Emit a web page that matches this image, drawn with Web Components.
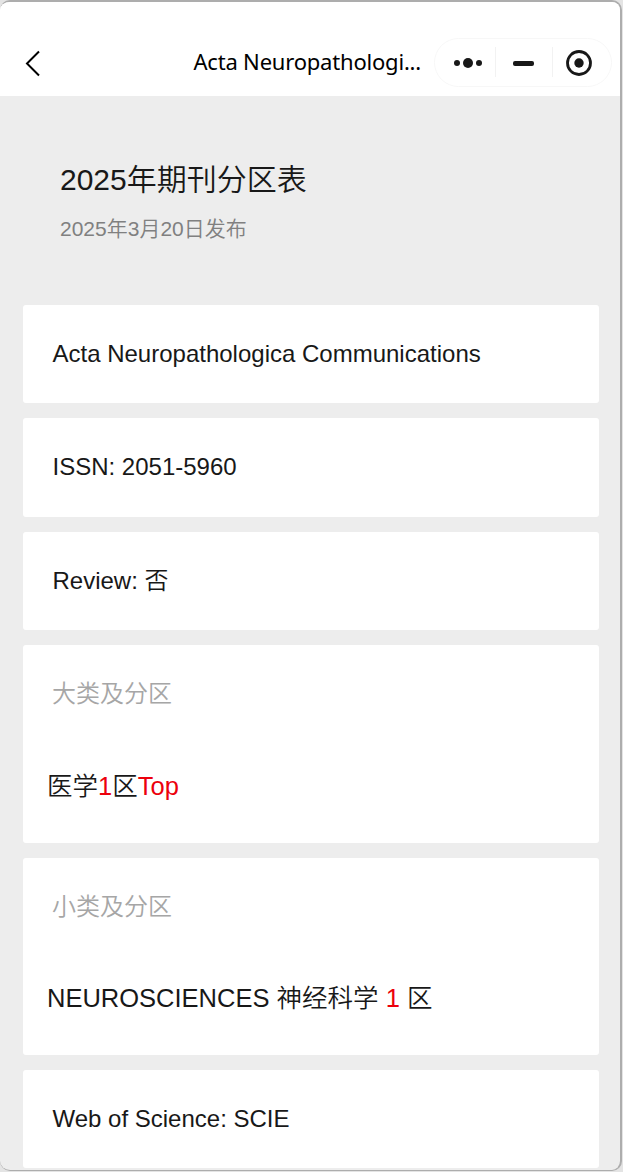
<!DOCTYPE html>
<html lang="zh-CN">
<head>
<meta charset="utf-8">
<title>2025年期刊分区表</title>
<style>
  body {
    margin: 0;
    height: 1172px;
    overflow: hidden;
    background: #e4e4e4;
    font-family: "Liberation Sans", "Noto Sans CJK SC", sans-serif;
    color: #181818;
  }
  .hot {
    color: #ec000c;
  }
</style>
</head>
<body>
<app-window>
  <nav-bar slot="nav" text="Acta Neuropathologi..."></nav-bar>
  <page-header>
    2025年期刊分区表
    <span slot="date">2025年3月20日发布</span>
  </page-header>
  <info-card>Acta Neuropathologica Communications</info-card>
  <info-card style="height: 99px; padding-bottom: 2px">ISSN: 2051-5960</info-card>
  <info-card>Review: 否</info-card>
  <zone-card label="大类及分区">医学<span class="hot">1</span>区<span class="hot">Top</span></zone-card>
  <zone-card label="小类及分区" style="height: 197px; --gap: 53px">NEUROSCIENCES 神经科学 <span class="hot">1</span> 区</zone-card>
  <info-card>Web of Science: SCIE</info-card>
</app-window>

<script>
class AppWindow extends HTMLElement {
  constructor() {
    super();
    this.attachShadow({ mode: 'open' });
    this.shadowRoot.innerHTML = `
    <style>
      :host {
        display: block;
        box-sizing: border-box;
        width: 622px;
        height: 1171px;
        border: solid #adadad;
        border-width: 2px 2px 1px 0;
        border-radius: 10px;
        background: #ededed;
        overflow: hidden;
      }

      main {
        display: flex;
        flex-direction: column;
        gap: 15px;
        padding: 0 21px 0 23px;
      }
    </style>
    <slot name="nav"></slot>
    <main><slot></slot></main>
    `;
  }
}

class NavBar extends HTMLElement {
  constructor() {
    super();
    this.attachShadow({ mode: 'open' });
    this.shadowRoot.innerHTML = `
    <style>
      :host {
        display: flex;
        box-sizing: border-box;
        height: 94px;
        padding: 36px 8px 8px 24px;
        align-items: center;
        background: white;
      }

      .back {
        width: 18px;
        height: 28px;
      }

      .title {
        flex: 1;
        padding: 0 13px 4px 0;
        text-align: right;
        white-space: nowrap;
        font: 22px "Noto Sans", sans-serif;
        letter-spacing: -0.2px;
        color: black;
      }

      .capsule {
        width: 178px;
        height: 50px;
      }
    </style>
    <svg class="back" viewBox="0 0 18 28">
      <path d="M15 2.5 3 14.5 15 26.5" fill="none" stroke="black" stroke-width="2"/>
    </svg>
    <span class="title"></span>
    <svg class="capsule" viewBox="0 0 178 50">
      <rect x=".5" y=".5" width="177" height="48" rx="24" fill="none" stroke="#f7f7f7"/>
      <path d="M61.5 9v30M118.5 9v30" stroke="#f2f2f2"/>
      <g fill="#181818">
        <circle cx="23" cy="25" r="3"/>
        <circle cx="34" cy="25" r="5"/>
        <circle cx="45" cy="25" r="3"/>
        <rect x="79" y="23" width="21" height="5" rx="2"/>
        <circle cx="145" cy="25" r="4.7"/>
      </g>
      <circle cx="145" cy="25" r="11.5" fill="none" stroke="#181818" stroke-width="2.8"/>
    </svg>
    `;
  }

  connectedCallback() {
    this.shadowRoot.querySelector('.title').textContent = this.getAttribute('text');
  }
}

class PageHeader extends HTMLElement {
  constructor() {
    super();
    this.attachShadow({ mode: 'open' });
    this.shadowRoot.innerHTML = `
    <style>
      :host {
        display: block;
        box-sizing: border-box;
        height: 194px;
        padding: 62px 37px 0;
        font-weight: 350;
      }

      .title {
        font-size: 30px;
        line-height: 44px;
      }

      .date {
        margin-top: 11px;
        font-size: 21px;
        line-height: 32px;
        color: #808080;
      }
    </style>
    <div class="title"><slot></slot></div>
    <div class="date"><slot name="date"></slot></div>
    `;
  }
}

class InfoCard extends HTMLElement {
  constructor() {
    super();
    this.attachShadow({ mode: 'open' });
    this.shadowRoot.innerHTML = `
    <style>
      :host {
        display: flex;
        box-sizing: border-box;
        height: 98px;
        padding: 0 30px 0 29.5px;
        align-items: center;
        background: white;
        border-radius: 3px;
        font-size: 24px;
        font-weight: 350;
        line-height: 36px;
      }
    </style>
    <span><slot></slot></span>
    `;
  }
}

class ZoneCard extends HTMLElement {
  constructor() {
    super();
    this.attachShadow({ mode: 'open' });
    this.shadowRoot.innerHTML = `
    <style>
      :host {
        display: block;
        box-sizing: border-box;
        height: 198px;
        padding: 31px 24px 0;
        background: white;
        border-radius: 3px;
        font-weight: 350;
      }

      .label {
        padding-left: 5px;
        font-size: 24px;
        line-height: 36px;
        color: #a6a6a6;
      }

      .value {
        margin-top: var(--gap, 54px);
        font-size: 25.5px;
        line-height: 40px;
      }
    </style>
    <div class="label"></div>
    <div class="value"><slot></slot></div>
    `;
  }

  connectedCallback() {
    this.shadowRoot.querySelector('.label').textContent = this.getAttribute('label');
  }
}

customElements.define('app-window', AppWindow);
customElements.define('nav-bar', NavBar);
customElements.define('page-header', PageHeader);
customElements.define('info-card', InfoCard);
customElements.define('zone-card', ZoneCard);
</script>
</body>
</html>
